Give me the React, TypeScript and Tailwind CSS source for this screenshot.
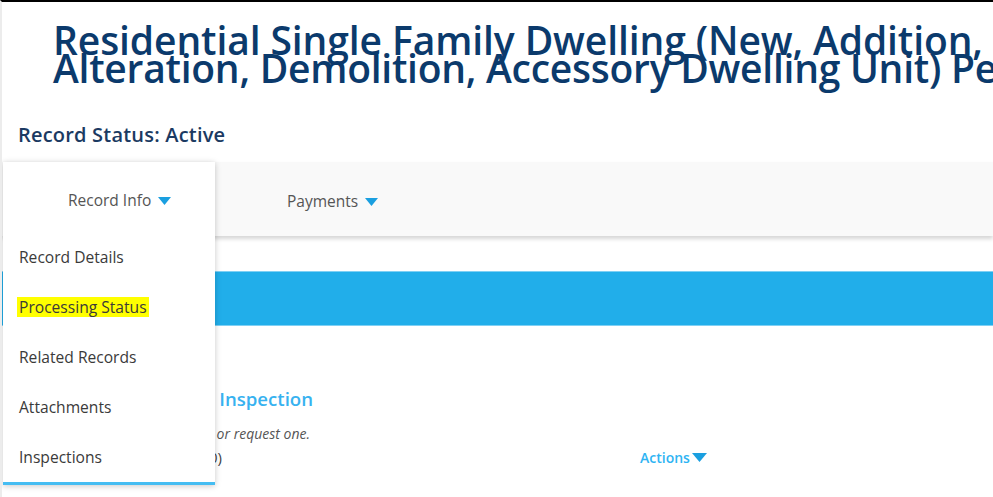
import React from 'react';

// ── Small blue caret used by tabs and actions ──────────────────
function Caret({ className = '' }: { className?: string }) {
  return (
    <svg width="13" height="8" viewBox="0 0 13 8" className={className}>
      <polygon points="0,0 13,0 6.5,8" fill="#1a9fe0" />
    </svg>
  );
}

const MENU_ITEMS = [
  { label: 'Record Details', active: false },
  { label: 'Processing Status', active: true },
  { label: 'Related Records', active: false },
  { label: 'Attachments', active: false },
  { label: 'Inspections', active: false },
];

export default function App() {
  const font = { fontFamily: '"Open Sans", "Noto Sans", Arial, sans-serif' };

  return (
    <div
      className="relative w-[993px] h-[497px] overflow-hidden bg-white border-t-2 border-black border-l-2 border-l-[#ececec]"
      style={font}
    >
      {/* ── Title ─────────────────────────────────────── */}
      <h1 className="mt-[24px] pl-[51px] text-[39px] leading-[28px] font-semibold text-[#0b3a6c] tracking-[-0.1px] whitespace-nowrap">
        <span className="block">Residential Single Family Dwelling (New, Addition,</span>
        <span className="block tracking-[-0.25px]">Alteration, Demolition, Accessory Dwelling Unit) Permit</span>
      </h1>

      {/* ── Status ────────────────────────────────────── */}
      <p className="mt-[41px] pl-[16px] text-[20px] leading-[24px] font-semibold text-[#1b3a62] tracking-[0.2px]">
        Record Status: Active
      </p>

      {/* ── Tab bar ───────────────────────────────────── */}
      <nav className="mt-[15px] h-[74px] bg-[#f9f9f9] shadow-[0_3px_4px_rgba(0,0,0,0.16)] flex items-center pt-[5px]">
        <div className="w-[213px]" />
        <button className="ml-[72px] flex items-center gap-[7px] text-[15.5px] text-[#555]">
          Payments
          <Caret />
        </button>
      </nav>

      {/* ── Blue section header ───────────────────────── */}
      <div className="mt-[35px] h-[55px] bg-[#21aeea] border-y border-[#7fd0f4]" />

      {/* ── Inspections content ───────────────────────── */}
      <div className="mt-[61px]">
        <div className="w-[311px] text-right whitespace-nowrap overflow-hidden text-[18.6px] leading-[24px] font-semibold text-[#37b2f0]">
          Schedule or Request an Inspection
        </div>
        <div className="mt-[14px] w-[308px] text-right whitespace-nowrap overflow-hidden text-[14px] leading-[18px] italic text-[#555]">
          Click the link above to schedule or request one.
        </div>
        <div className="mt-[4px] flex items-center h-[20px]">
          <div className="w-[220px] text-right whitespace-nowrap overflow-hidden text-[15px] text-[#444]">
            Upcoming (0)
          </div>
          <button className="ml-[418px] flex items-center gap-[2px] text-[14px] font-semibold text-[#2fb4f3]">
            Actions
            <svg width="15" height="9" viewBox="0 0 15 9">
              <polygon points="0,0 15,0 7.5,9" fill="#1a9fe0" />
            </svg>
          </button>
        </div>
      </div>

      {/* ── Open dropdown (overlay) ───────────────────── */}
      <div className="absolute z-10 left-[1px] top-[160px] w-[212px] bg-white shadow-[0_1px_6px_rgba(0,0,0,0.22)] border-b-[3px] border-[#45bdf2]">
        <div className="h-[70px] pt-2 flex items-center pl-[65px]">
          <span className="flex items-center gap-[7px] text-[15.5px] text-[#555]">
            Record Info
            <Caret />
          </span>
        </div>
        {MENU_ITEMS.map((item) => (
          <div key={item.label} className="h-[50px] flex items-center pl-[14px]">
            <span
              className={
                item.active
                  ? 'text-[15.6px] leading-[20px] text-[#3a3a3a] bg-[#ffff00] px-[2px]'
                  : 'text-[15.6px] leading-[20px] text-[#3a3a3a] px-[2px]'
              }
            >
              {item.label}
            </span>
          </div>
        ))}
      </div>
    </div>
  );
}
